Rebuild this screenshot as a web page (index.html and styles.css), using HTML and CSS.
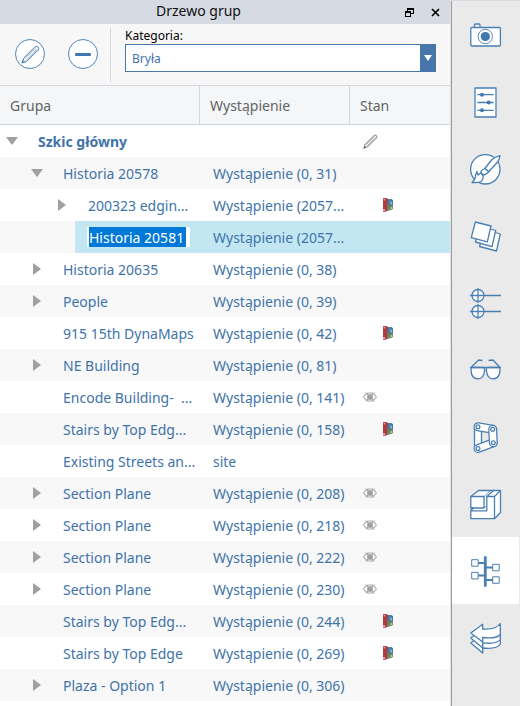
FILE: index.html
```html
<!DOCTYPE html>
<html lang="pl">
<head>
<meta charset="utf-8">
<title>Drzewo grup</title>
<link rel="stylesheet" href="styles.css">
</head>
<body>
<svg class="defs" aria-hidden="true">
  <symbol id="eye" viewBox="0 0 14 12">
    <path d="M.5 6Q3 2.500 5 2M.5 6Q3 9.500 5 10M13.500 6Q11 2.500 9 2M13.500 6Q11 9.500 9 10M4 2H10M4 10H10" fill="none" stroke="#a8a8a8" stroke-width="1.100"/>
    <circle cx="7" cy="6" r="3" fill="#a6a6a6"/>
    <path d="M2.500 1.500 11.500 10.500M11.500 1.500 2.500 10.500" stroke="#9a9a9a" stroke-width=".9"/>
  </symbol>
  <symbol id="material" viewBox="0 0 12 14">
    <path d="M1 1Q1 0 2 0L10 1.500Q11 2 11 3V11L2 14Q1 14 1 13Z" fill="#7d5a68"/>
    <path d="M1 1Q1 0 2 0L5 .6 4.500 13 2 14Q1 14 1 13Z" fill="#b8383e"/>
    <path d="M6 1 10 1.500Q11 2 11 3V7L7 6Z" fill="#3f7fae"/>
    <path d="M5.500 7 11 7.500V11L5.500 12.700Z" fill="#6f8a5c"/>
    <path d="M5.500 6 8.500 6.500V9.500L5.500 9Z" fill="#3f8f72"/>
    <path d="M8 3.500 10 4V6.500L8 6Z" fill="#7fb6e0"/>
    <circle cx="2" cy="12.300" r="1" fill="#efdcd8"/><circle cx="9.500" cy="10" r="1" fill="#dccba5"/><circle cx="2.300" cy="1.700" r=".8" fill="#ecc2c0"/>
  </symbol>
  <symbol id="pencil" viewBox="0 0 18 18">
    <path d="M1 17 2.500 12.500 13 2Q14.500 .5 16.200 2Q17.500 3.500 16 5L5.500 15.500Z" fill="none" stroke="currentColor" stroke-width=".9"/>
    <path d="M3.500 13 14 2.800M5 14.500 15.500 4M1 17 2.500 14.500 3.500 15.500Z" fill="none" stroke="currentColor" stroke-width=".6"/>
  </symbol>
</svg>
<div class="app">
  <main class="panel">
    <header class="titlebar">
      <h1>Drzewo grup</h1>
      <div class="window-buttons">
        <button type="button" aria-label="Przywróć"><svg width="9" height="9" shape-rendering="crispEdges"><path d="M2 0H9V6H6V5H8V2H3V3H2ZM0 3H6V9H0ZM1 5V8H5V5Z" fill="#000" fill-rule="evenodd"/></svg></button>
        <button type="button" aria-label="Zamknij"><svg width="9" height="9"><path d="M1 1 8 8M8 1 1 8" stroke="#000" stroke-width="1.700"/></svg></button>
      </div>
    </header>
    <section class="toolbar">
      <div class="tools">
        <button class="round" type="button" aria-label="Edytuj"><svg width="19" height="19"><use href="#pencil"/></svg></button>
        <button class="round" type="button" aria-label="Usuń"><svg width="16" height="3"><rect width="16" height="3" rx="1" fill="#4178ae"/></svg></button>
      </div>
      <div class="category">
        <label for="category">Kategoria:</label>
        <div class="select">
          <select id="category"><option>Bryła</option></select>
          <span class="drop"><svg width="8" height="6"><path d="M0 0H8L4 6Z" fill="#fff"/></svg></span>
        </div>
      </div>
    </section>
    <table class="tree">
      <colgroup><col class="c-group"><col class="c-instance"><col class="c-state"></colgroup>
      <thead><tr><th>Grupa</th><th>Wystąpienie</th><th>Stan</th></tr></thead>
      <tbody>
        <tr class="root"><td><div class="node"><button class="open" type="button" aria-label="Zwiń"></button><span>Szkic główny</span></div></td><td></td><td><svg class="state" width="15" height="15" aria-label="Edytowany"><use href="#pencil"/></svg></td></tr>
        <tr><td><div class="node l1"><button class="open" type="button" aria-label="Zwiń"></button><span>Historia 20578</span></div></td><td>Wystąpienie (0, 31)</td><td></td></tr>
        <tr><td><div class="node l2"><button class="closed" type="button" aria-label="Rozwiń"></button><span>200323 edgin...</span></div></td><td>Wystąpienie (2057...</td><td><svg class="state material" width="12" height="14"><use href="#material"/></svg></td></tr>
        <tr class="selected"><td><div class="node l2"><span class="edit"><input type="text" value="Historia 20581" aria-label="Nazwa grupy"></span></div></td><td>Wystąpienie (2057...</td><td></td></tr>
        <tr><td><div class="node l1"><button class="closed" type="button" aria-label="Rozwiń"></button><span>Historia 20635</span></div></td><td>Wystąpienie (0, 38)</td><td></td></tr>
        <tr><td><div class="node l1"><button class="closed" type="button" aria-label="Rozwiń"></button><span>People</span></div></td><td>Wystąpienie (0, 39)</td><td></td></tr>
        <tr><td><div class="node l1 leaf"><span>915 15th DynaMaps</span></div></td><td>Wystąpienie (0, 42)</td><td><svg class="state material" width="12" height="14"><use href="#material"/></svg></td></tr>
        <tr><td><div class="node l1"><button class="closed" type="button" aria-label="Rozwiń"></button><span>NE Building</span></div></td><td>Wystąpienie (0, 81)</td><td></td></tr>
        <tr><td><div class="node l1 leaf"><span>Encode Building-&nbsp; ...</span></div></td><td>Wystąpienie (0, 141)</td><td><svg class="state" width="14" height="12"><use href="#eye"/></svg></td></tr>
        <tr><td><div class="node l1 leaf"><span>Stairs by Top Edg...</span></div></td><td>Wystąpienie (0, 158)</td><td><svg class="state material" width="12" height="14"><use href="#material"/></svg></td></tr>
        <tr><td><div class="node l1 leaf"><span>Existing Streets an...</span></div></td><td>site</td><td></td></tr>
        <tr><td><div class="node l1"><button class="closed" type="button" aria-label="Rozwiń"></button><span>Section Plane</span></div></td><td>Wystąpienie (0, 208)</td><td><svg class="state" width="14" height="12"><use href="#eye"/></svg></td></tr>
        <tr><td><div class="node l1"><button class="closed" type="button" aria-label="Rozwiń"></button><span>Section Plane</span></div></td><td>Wystąpienie (0, 218)</td><td><svg class="state" width="14" height="12"><use href="#eye"/></svg></td></tr>
        <tr><td><div class="node l1"><button class="closed" type="button" aria-label="Rozwiń"></button><span>Section Plane</span></div></td><td>Wystąpienie (0, 222)</td><td><svg class="state" width="14" height="12"><use href="#eye"/></svg></td></tr>
        <tr><td><div class="node l1"><button class="closed" type="button" aria-label="Rozwiń"></button><span>Section Plane</span></div></td><td>Wystąpienie (0, 230)</td><td><svg class="state" width="14" height="12"><use href="#eye"/></svg></td></tr>
        <tr><td><div class="node l1 leaf"><span>Stairs by Top Edg...</span></div></td><td>Wystąpienie (0, 244)</td><td><svg class="state material" width="12" height="14"><use href="#material"/></svg></td></tr>
        <tr><td><div class="node l1 leaf"><span>Stairs by Top Edge</span></div></td><td>Wystąpienie (0, 269)</td><td><svg class="state material" width="12" height="14"><use href="#material"/></svg></td></tr>
        <tr><td><div class="node l1"><button class="closed" type="button" aria-label="Rozwiń"></button><span>Plaza - Option 1</span></div></td><td>Wystąpienie (0, 306)</td><td></td></tr>
      </tbody>
    </table>
  </main>
  <nav class="rail" aria-label="Palety">
    <button type="button" aria-label="Sceny"><svg viewBox="0 0 31 31"><path d="M4.500 8.500V6Q4.500 5 5.500 5H9Q10 5 10 6V8.500"/><rect x=".8" y="8.500" width="29.600" height="18.500" rx="1"/><circle cx="15.300" cy="17.500" r="7.200" stroke-width=".9"/><circle class="fill" cx="15.300" cy="17.500" r="4.600"/></svg></button>
    <button type="button" aria-label="Właściwości"><svg viewBox="0 0 31 31"><rect x="5" y="2" width="21" height="29"/><path d="M7.300 8.700H23.700M7.300 16.500H23.700M7.300 24.300H23.700"/><circle class="fill" cx="12" cy="8.700" r="2"/><circle class="fill" cx="18.700" cy="16.500" r="2"/><circle class="fill" cx="12" cy="24.300" r="2"/></svg></button>
    <button type="button" aria-label="Materiały"><svg viewBox="0 0 31 31"><circle cx="15.300" cy="16.300" r="14.700"/><path d="M30 2.700Q25 4 22 6.500L14.800 15.500 18.700 18.700 28 8.500Q29.500 6 30 2.700Z"/><path d="M14.800 15.500Q11 17 10.700 19.700L14 22Q17 21.500 18.700 18.700Z"/><path d="M7 18.500 8 22 10.700 20 13.200 23 12.500 27Q11 30 2 29.500Q6 26 5.500 22Z"/></svg></button>
    <button type="button" aria-label="Warstwy"><svg viewBox="0 0 31 31"><path d="M15 9.500 30.300 14 26.500 31 9.500 26.500Z"/><path d="M10 6 25.700 10.500 22 26.700 5.500 22Z"/><path d="M5.300 2 21 6 17.300 21.800 1.300 17.700Z"/></svg></button>
    <button type="button" aria-label="Poziomy"><svg viewBox="0 0 31 31"><circle cx="8" cy="8.500" r="6"/><circle cx="8" cy="24.500" r="6"/><path d="M0 8.500H31M0 24.500H31M8 1.300V15.700M8 17.300V31.700"/></svg></button>
    <button type="button" aria-label="Style wizualne"><svg viewBox="0 0 31 31"><path d="M1 13.500H13.500Q15 14 14.500 17Q13.500 24.800 8.500 24.800Q2.500 24.800 1.300 19ZM30 13.500H17.500Q16 14 16.500 17Q17.500 24.800 22.500 24.800Q28.500 24.800 29.700 19Z"/><path class="none" d="M0 13.500H31M1.500 13 8.500 6 12.500 6.500M29.500 13 23 6 18.500 6.500"/></svg></button>
    <button type="button" aria-label="Dynamo"><svg viewBox="0 0 31 31"><path d="M4.500 6H11.500V27H4.500Z"/><g class="links"><path d="M8 5.700 22.700 8.300M8 27.500 23.300 21.800"/><path class="inside" d="M8 5.700 22.700 8.300M8 27.500 23.300 21.800"/><path d="M22.700 8.300 23.300 21.800"/><path class="inside" d="M22.700 8.300 23.300 21.800"/></g><circle cx="8" cy="5.700" r="1.900"/><circle cx="22.700" cy="8.300" r="1.900"/><circle cx="23.300" cy="21.800" r="1.900"/><circle cx="8" cy="27.500" r="1.900"/></svg></button>
    <button type="button" aria-label="Bryły"><svg viewBox="0 0 31 31"><path d="M.8 8.500 8.500 2.500H30.500V24.500L24.500 30.700H.8V22.500L3.500 20H.8Z"/><path class="none" d="M.8 8.500H14V20H.8M.8 22.800H16.800V8.500H24.500V30.700M24.500 8.500 30.500 2.500M16.800 8.500 23.500 2.500"/><path class="none" stroke-width=".8" d="M14 8.500 20.500 2.500M14 20 16.800 17.500"/></svg></button>
    <button class="active" type="button" aria-label="Drzewo grup"><svg viewBox="0 0 31 31"><path class="trunk" d="M15.300 1.300V31.700"/><path class="branch" d="M8 8H15M15 12.500H23M8 20.500H15M15 25H23"/><path class="box" d="M1.700 4.700H8.200V11.200H1.700ZM22.700 9.300H29.200V15.800H22.700ZM1.700 17.400H8.200V23.900H1.700ZM22.700 21.800H29.200V28.300H22.700Z"/></svg></button>
    <button type="button" aria-label="Cofnij"><svg viewBox="0 0 31 31"><path d="M.8 21 12.700 12V17Q26 18 30.300 10V22Q27 27.500 12.700 26V31Z"/><path d="M.8 16 12.700 7V12Q26 13 30.300 6V17.500Q27 22.500 12.700 20.800V26Z"/><path d="M.8 11 12.700 2.300V7Q26 8 30.300 1.500V12.500Q27 17 12.700 15.500V20Z"/></svg></button>
  </nav>
</div>
</body>
</html>
```
FILE: styles.css
```css
* { box-sizing: border-box; }
body {
  margin: 0;
  background: #fff;
  color: #4073aa;
  font-family: "Noto Sans", "Open Sans", sans-serif;
  font-size: 14px;
}
button {
  display: flex;
  align-items: center;
  justify-content: center;
  padding: 0;
  border: 0;
  background: none;
}
.defs { position: absolute; width: 0; height: 0; }
.app { display: flex; min-height: 100vh; background: #d6dbe3; }
.panel { flex: 1; min-width: 0; background: #fff; border-right: 1px solid #e3e3e3; }

.titlebar {
  display: grid;
  grid-template-columns: 1fr auto;
  align-items: center;
  height: 24px;
  background: #d6dbe3;
}
.titlebar h1 {
  margin: 0;
  padding: 0 8px 2px 0;
  color: #111;
  font-size: 14px;
  font-weight: 400;
  line-height: 20px;
  text-align: center;
}
.window-buttons { display: flex; gap: 17px; padding: 1px 10px 0 0; }

.toolbar { display: flex; height: 61px; padding: 4px 14px 3px 15px; background: #f7f7f7; }
.tools { display: flex; align-items: center; gap: 23px; padding: 0 12px 2px 0; border-right: 1px solid #d3d8df; }
.round {
  width: 30px;
  height: 30px;
  border: 1px solid #5486b8;
  border-radius: 50%;
  background: #fff;
  color: #4178ae;
}
.category { flex: 1; padding: 0 0 0 14px; }
.category label { display: block; color: #000; font-size: 12px; line-height: 16px; }
.select { display: flex; height: 28px; border: 1px solid #4676ab; background: #fff; }
.select select {
  flex: 1;
  min-width: 0;
  padding: 0 6px;
  border: 0;
  appearance: none;
  background: #fff;
  color: #4073aa;
  font: inherit;
  font-size: 12px;
}
.drop { display: flex; align-items: center; justify-content: center; width: 15px; background: #4676ab; }

.tree { width: 100%; table-layout: fixed; border-collapse: separate; border-spacing: 0; }
.c-group { width: 200px; }
.c-instance { width: 150px; }
.tree th {
  height: 40px;
  padding: 0 10px;
  border: 1px solid #d3d8df;
  border-width: 1px 1px 1px 0;
  background: #f4f6f8;
  color: #636363;
  font-weight: 400;
  text-align: left;
}
.tree th:last-child { border-right: 0; }
.tree td { height: 32px; padding: 0 0 0 13px; white-space: nowrap; }
.tree td:first-child { padding: 0; }
.tree tr:nth-child(even) td { background: #f8f8f8; }
.tree tbody tr.selected td { background: #c3e7f2; }
.tree tbody tr.selected td:first-child { background: linear-gradient(to right, #f8f8f8 75px, #c3e7f2 75px); }
.root { font-weight: 700; }
.node { display: flex; align-items: center; gap: 20px; padding-left: 6px; }
.l1 { padding-left: 31px; }
.l2 { padding-left: 56px; }
.leaf { padding-left: 63px; }
.open::before, .closed::before { content: ""; background: #a0a0a0; }
.open, .closed { width: 12px; height: 12px; }
.open::before { width: 12px; height: 8px; clip-path: polygon(0 0, 100% 0, 50% 100%); }
.closed::before { width: 8px; height: 12px; clip-path: polygon(0 0, 100% 50%, 0 100%); }
.edit { display: flex; margin-left: 31px; padding: 0 4px 0 2px; background: #fff; }
.edit input {
  width: 97px;
  height: 20px;
  padding: 0;
  border: 0;
  background: #0078d7;
  color: #fff;
  font: inherit;
}
.state { display: block; color: #555; }
.material { margin-left: 19px; }

.rail { width: 69px; margin-top: 1px; padding-right: 1px; border-left: 1px solid #9a9a9a; background: #eaeaea; }
.rail button { width: 100%; height: 67px; }
.rail .active { background: #fff; }
.rail svg { width: 31px; height: 31px; overflow: visible; fill: #fff; stroke: #4a7fb3; stroke-width: 1.3; stroke-linejoin: round; }
.rail .fill { fill: #4178ae; stroke: none; }
.rail .none { fill: none; }
.rail .trunk { stroke-width: 2.8; }
.rail .branch { stroke-width: 1.9; }
.rail .box { stroke-width: 1; }
.links path { stroke-width: 9; stroke-linecap: round; }
.links .inside { stroke: #fff; stroke-width: 6.5; }
```
